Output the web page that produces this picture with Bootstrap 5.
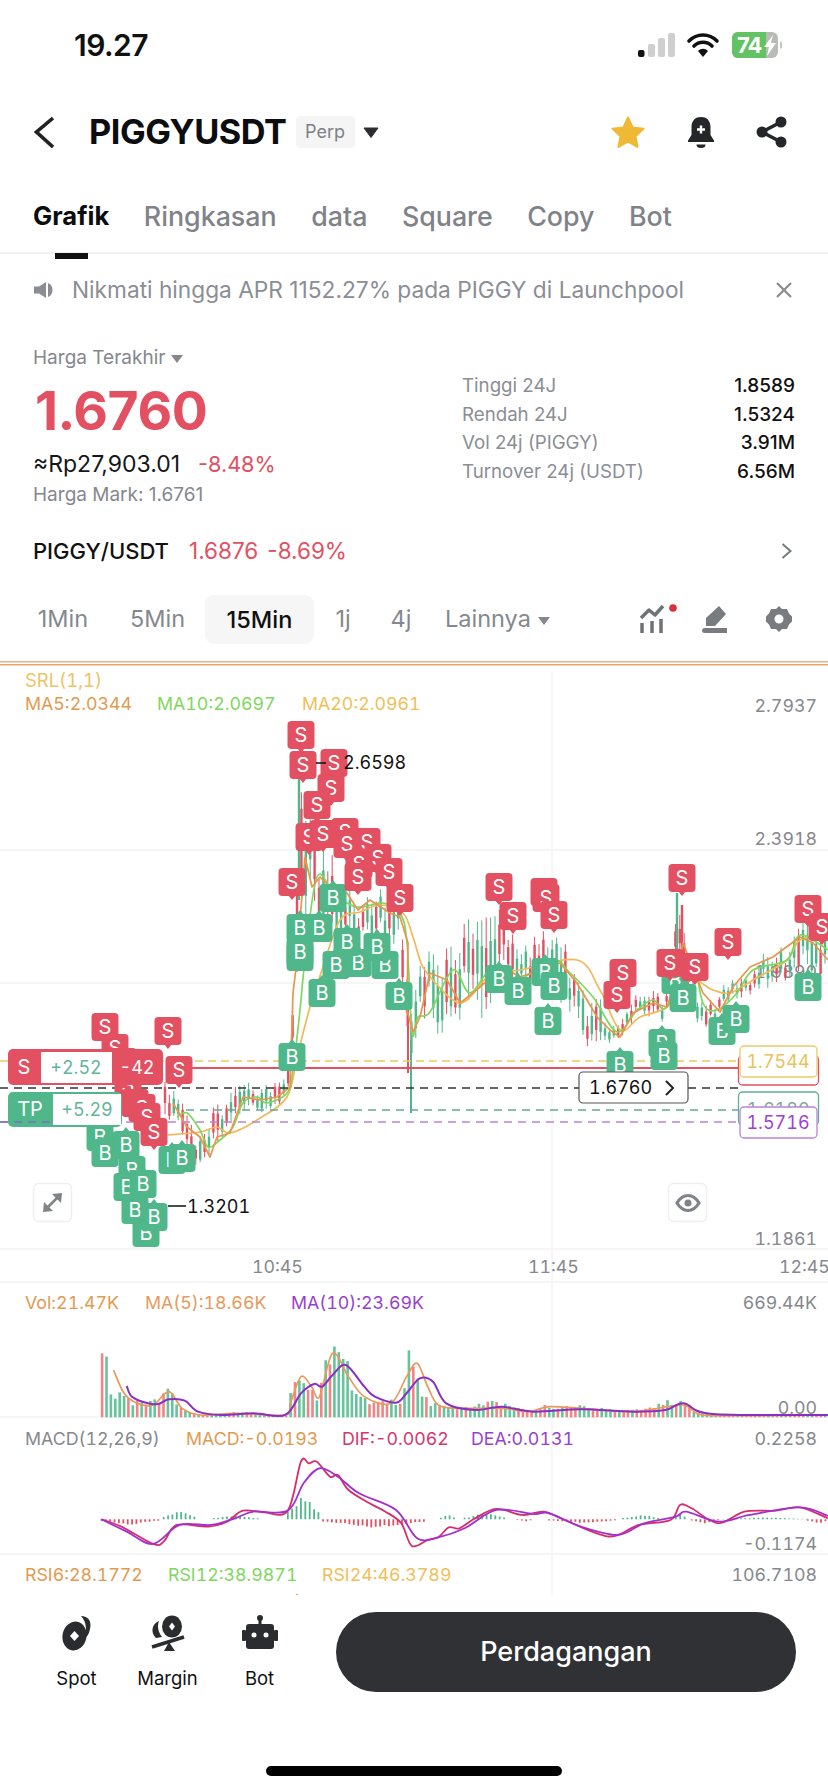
<!DOCTYPE html>
<html lang="id"><head><meta charset="utf-8"><title>PIGGYUSDT</title>
<link href="https://cdn.jsdelivr.net/npm/bootstrap@5.3.0/dist/css/bootstrap.min.css" rel="stylesheet">
<style>
body{margin:0;background:#fff;font-family:Inter,"Liberation Sans",sans-serif;color:#1b1c1f}
.k-app{width:828px;height:1792px;overflow:hidden}
.k-status{height:90px;padding:0 44px 0 74px}
.k-clock{font-size:30px;font-weight:600;letter-spacing:-.5px;color:#111}
.k-head{height:84px;padding:0 41px 0 34px}
.k-title{font-size:34.3px;font-weight:700;margin-left:35px;letter-spacing:-.45px;color:#0c0d0f}
.k-perp{width:59px;height:32px;background:#f5f5f5;border-radius:4px;margin-left:9px;font-size:18px;color:#7d8187;line-height:32px;text-align:center}
.k-tabs{height:80px;padding:0 33px;gap:34.5px;border-bottom:2px solid #f1f2f3;font-size:26.8px;color:#7f8389;font-weight:500}
.k-tab-on{color:#0c0d0f;font-weight:700;font-size:25.6px}
.k-tab-on::after{content:"";position:absolute;left:22px;bottom:-28px;width:33px;height:6px;background:#111}
.k-tabitem{line-height:30px;padding-top:6px}
.k-notice{height:72px;padding:0 36px 0 33px;color:#8a8e94;font-size:22.7px}
.k-stats{height:195px;padding:0 33px}
.k-lab{line-height:24px;padding-top:20px;box-sizing:content-box;font-size:19px;color:#84888e}
.k-price{line-height:82px;font-size:53.5px;font-weight:700;color:#e25061;letter-spacing:-.5px;padding-left:2px}
.k-rp{line-height:24px;font-size:23px;font-weight:400;color:#15161a}
.k-pct{font-size:21.6px;margin-left:18px;color:#e25061}
.k-red{color:#e25061}
.k-mark{line-height:38px;font-size:19px;color:#84888e}
.k-right{width:333px;padding-top:46px;font-size:18.7px;color:#8a8e94}
.k-right>div{height:28.7px;line-height:28.7px}
.k-right b{font-weight:500;color:#111;font-size:19px}
.k-pair{height:60px;padding:0 36px 0 33px;font-size:22px;font-weight:500;color:#111}
.k-pair span.k-red{font-weight:400;font-size:22.5px;margin-left:9px}
.k-pair span.k-first{margin-left:20px}
.k-frames{height:80px;padding-left:16px;padding-right:36px;padding-bottom:4px;font-size:23.5px;color:#84888e}
.k-fr{text-align:center}
.k-chip{width:109px;height:49px;line-height:49px;background:#f6f6f6;border-radius:9px;color:#111;font-weight:500}
.k-chart{display:block;width:828px;height:934px}
.k-chart text{font-family:Inter,"Liberation Sans",sans-serif;font-size:17.8px;font-variant-numeric:tabular-nums}
.k-chart .k-ax{fill:#85888c}
.k-chart .k-mk{font-size:18px;text-anchor:middle;fill:#fff}
.k-chart .k-let{font-size:20px;text-anchor:middle;fill:#fff}
.k-chart .k-blk{font-size:18px;fill:#111}
.k-chart .k-sr{font-size:18.4px;fill:#ecc566}
.k-bar{height:171px;padding-top:17px;padding-left:31px;padding-right:32px}
.k-act{padding-top:3px;text-align:center;font-size:18.5px;color:#111}
.k-act svg{display:block;margin:0 auto}
.k-act div{line-height:26px;margin-top:14px}
.k-trade{width:460px;height:80px;background:#2f3135;border:0;border-radius:40px;color:#fff;font-size:27px;font-weight:500}
.k-trade:hover{background:#2f3135;color:#fff}
.k-home{width:296px;height:10px;background:#000;border-radius:5px;margin-left:266px}
</style></head>
<body>
<div class="k-app d-flex flex-column">
 <div class="k-status d-flex align-items-center justify-content-between">
  <div class="k-clock">19.27</div>
  <svg width="152" height="30" viewBox="632 30 152 30">
   <rect x="638" y="50" width="6.5" height="7" rx="2" fill="#111"/><rect x="648" y="44" width="7" height="13" rx="2" fill="#cfcfcf"/><rect x="658" y="38" width="7" height="19" rx="2" fill="#cfcfcf"/><rect x="668" y="33" width="7" height="24" rx="2" fill="#cfcfcf"/>
   <g fill="none" stroke="#111" stroke-width="3.6" stroke-linecap="round"><path d="M689 41C697 33 709 33 717 41"/><path d="M694 46C699 41 707 41 712 46"/></g><path d="M698 51C701 48 705 48 708 51L703 57Z" fill="#111"/>
   <rect x="732" y="32" width="46" height="26" rx="6" fill="#b9bbb9"/><path d="M738 32H766V58H738A6 6 0 0 1 732 52V38A6 6 0 0 1 738 32Z" fill="#62c264"/><path d="M780 41c3 1 3 7 0 8z" fill="#c4c4c4"/>
   <text x="737" y="53" font-family="Inter,Liberation Sans,sans-serif" font-weight="700" font-size="22" fill="#fff" letter-spacing="-1">74</text>
   <path d="M773 35L764 47H769L767 56L776 43H771Z" fill="#fff"/>
  </svg>
 </div>
 <div class="k-head d-flex align-items-center">
  <svg width="20" height="32" viewBox="34 116 20 32" fill="none" stroke="#222" stroke-width="3.6"><path d="M53 118L36.500 132L53 147"/></svg>
  <div class="k-title">PIGGYUSDT</div>
  <div class="k-perp">Perp</div>
  <svg class="ms-2" width="16" height="11" viewBox="0 0 16 11"><path d="M1 1H15L8 10.500Z" fill="#2a2c30" stroke="#2a2c30" stroke-linejoin="round"/></svg>
  <div class="ms-auto d-flex align-items-center" style="gap:40px">
   <svg width="36" height="34" viewBox="0 0 36 34"><path d="M18 2.500L22.600 12.500L33.500 13.800L25.500 21.200L27.600 32L18 26.600L8.400 32L10.500 21.200L2.500 13.800L13.400 12.500Z" fill="#f0b935" stroke="#f0b935" stroke-width="2" stroke-linejoin="round"/></svg>
   <svg width="30" height="32" viewBox="0 0 30 32"><path d="M15 1C8 1 5.500 6 5.500 11V19L2 24.500V26H28V24.500L24.500 19V11C24.500 6 22 1 15 1Z" fill="#24262a"/><path d="M10.500 28.500A4.500 3.500 0 0 0 19.500 28.500Z" fill="#24262a"/><path d="M15 9.500V17.500M11 13.500H19" stroke="#fff" stroke-width="2.400"/></svg>
   <svg width="31" height="32" viewBox="0 0 31 32"><g fill="#24262a"><circle cx="25" cy="6" r="5.500"/><circle cx="6" cy="16" r="5.500"/><circle cx="25" cy="26" r="5.500"/></g><path d="M25 6L6 16L25 26" fill="none" stroke="#24262a" stroke-width="3.500"/></svg>
  </div>
 </div>
 <div class="k-tabs d-flex align-items-center">
  <div class="k-tabitem k-tab-on position-relative">Grafik</div><div class="k-tabitem">Ringkasan</div><div class="k-tabitem">data</div><div class="k-tabitem">Square</div><div class="k-tabitem">Copy</div><div class="k-tabitem">Bot</div>
 </div>
 <div class="k-notice d-flex align-items-center">
  <svg class="me-3" width="23" height="18" viewBox="0 0 23 18"><path d="M1 5.500H6L13 1V17L6 12.500H1Z" fill="#8a8e94"/><path d="M15 2C21 4 21 14 15 16Z" fill="#8a8e94"/></svg>
  <div>Nikmati hingga APR 1152.27% pada PIGGY di Launchpool</div>
  <svg class="ms-auto" width="16" height="16" viewBox="0 0 16 16"><path d="M1 1L15 15M15 1L1 15" stroke="#888b90" stroke-width="2.200"/></svg>
 </div>
 <div class="k-stats d-flex justify-content-between">
  <div>
   <div class="k-lab">Harga Terakhir <svg width="12" height="8" viewBox="0 0 12 8" style="vertical-align:1px"><path d="M0 0H12L6 8Z" fill="#84888e"/></svg></div>
   <div class="k-price">1.6760</div>
   <div class="k-rp">≈Rp27,903.01<span class="k-pct">-8.48%</span></div>
   <div class="k-mark">Harga Mark: 1.6761</div>
  </div>
  <div class="k-right">
   <div class="d-flex justify-content-between"><span>Tinggi 24J</span><b>1.8589</b></div>
   <div class="d-flex justify-content-between"><span>Rendah 24J</span><b>1.5324</b></div>
   <div class="d-flex justify-content-between"><span>Vol 24j (PIGGY)</span><b>3.91M</b></div>
   <div class="d-flex justify-content-between"><span>Turnover 24j (USDT)</span><b>6.56M</b></div>
  </div>
 </div>
 <div class="k-pair d-flex align-items-center">
  <div>PIGGY/USDT</div><span class="k-red k-first">1.6876</span><span class="k-red">-8.69%</span>
  <svg class="ms-auto" width="11" height="16" viewBox="0 0 11 16"><path d="M1.500 1L9.500 8L1.500 15" fill="none" stroke="#777b80" stroke-width="2"/></svg>
 </div>
 <div class="k-frames d-flex align-items-center">
  <div class="k-fr" style="width:94px">1Min</div><div class="k-fr" style="width:95px">5Min</div><div class="k-fr k-chip">15Min</div><div class="k-fr" style="width:58px">1j</div><div class="k-fr" style="width:58px">4j</div>
  <div style="padding-left:15px">Lainnya <svg width="12" height="8" viewBox="0 0 12 8" style="vertical-align:2px"><path d="M0 0H12L6 8Z" fill="#84888e"/></svg></div>
  <div class="ms-auto d-flex align-items-center">
   <svg width="38" height="30" viewBox="0 0 38 30"><path d="M2 14L10 6L16 11L24 2" fill="none" stroke="#6f7378" stroke-width="3.500" stroke-linejoin="round"/><path d="M3 19V29M13 17V29M22 15V29" stroke="#6f7378" stroke-width="3.500"/><circle cx="34" cy="4" r="3.800" fill="#d8303c"/></svg>
   <svg style="margin-left:25px" width="26" height="27" viewBox="0 0 26 27"><path d="M17 0L24 8L13 20H4V12ZM3 22H25V27H3Q0 27 0 24.500Q0 22 3 22Z" fill="#787c81"/></svg>
   <svg style="margin-left:38px" width="26" height="26" viewBox="0 0 26 26"><path fill-rule="evenodd" d="M13 0L16 3L21 3L23 7.500L26 10.500V15.500L23 18.500L21 23L16 23L13 26L10 23L5 23L3 18.500L0 15.500V10.500L3 7.500L5 3L10 3ZM13 8.500A4.500 4.500 0 1 0 13 17.500A4.500 4.500 0 1 0 13 8.500Z" fill="#787c81"/></svg>
  </div>
 </div>
 <svg class="k-chart" viewBox="0 661 828 934" id="chart">
  <rect x="0" y="661" width="828" height="1.500" fill="#d9b78c"/><rect x="0" y="664" width="828" height="1.500" fill="#eaa468"/>
  <g stroke="#f3f3f4" stroke-width="1.300"><path d="M552 672V1595M0 850H828M0 983H828M0 1249H828M0 1282H828M0 1554H828M0 1417H828"/></g>
  <text x="817" y="978" text-anchor="end" class="k-ax">1.9890</text>
  <g id="vol"></g><g id="candles"></g>
  <g fill="none" stroke-width="1.700" stroke-linejoin="round">
   <path id="ma20" stroke="#f0b95a"/><path id="ma10" stroke="#7fd85e"/><path id="ma5" stroke="#e9954c"/>
  </g>
  <g fill="none" stroke-width="1.500">
   <path d="M0 1061H740" stroke="#ebc95f" stroke-dasharray="8 5"/>
   <path d="M186 1068H740" stroke="#e25061" stroke-width="2"/>
   <path d="M0 1088H579M688 1088H740" stroke="#333" stroke-dasharray="8 6"/>
   <path d="M186 1110H740" stroke="#63a99b" stroke-dasharray="8 6"/>
   <path d="M0 1122H740" stroke="#b884d8" stroke-dasharray="8 6"/>
  </g>
  <g id="marks"></g>
  <!-- order chips -->
  <rect x="8" y="1049" width="155" height="36" rx="5" fill="#e25061"/><rect x="41" y="1052" width="71" height="31" fill="#fff"/>
  <text x="24" y="1074" class="k-let">S</text><text x="76" y="1074" class="k-mk" style="fill:#63b59a">+2.52</text><text x="137" y="1074" class="k-mk">-42</text>
  <rect x="8" y="1092" width="114" height="35" rx="5" fill="#4fb78a"/><rect x="53" y="1094" width="68" height="31" fill="#fff"/>
  <text x="30" y="1116" class="k-let">TP</text><text x="87" y="1116" class="k-mk" style="fill:#63b59a">+5.29</text>
  <path d="M0 1122H53" stroke="#7f6fc0" stroke-width="1.500" stroke-dasharray="8 6"/>
  <!-- price tags -->
  <rect x="579" y="1072" width="109" height="31" rx="4" fill="#fff" stroke="#555" stroke-width="1.200"/>
  <text x="589" y="1094" style="font-size:18px;fill:#111">1.6760</text><path d="M666 1081L673 1088L666 1095" fill="none" stroke="#222" stroke-width="2"/>
  <rect x="738.500" y="1056" width="80" height="29" rx="4" fill="#fff" stroke="#e25061" stroke-width="1.300"/>
  <rect x="740" y="1046" width="77" height="31" rx="4" fill="#fff" stroke="#ecc96a" stroke-width="1.300"/>
  <text x="778" y="1068" class="k-mk" style="fill:#e9c25a">1.7544</text>
  <rect x="738.500" y="1092" width="80" height="33" rx="4" fill="#fff" stroke="#5fae95" stroke-width="1.300"/>
  <text x="778" y="1116" class="k-mk" style="fill:#7fa99b">1.6180</text>
  <rect x="740" y="1107" width="77" height="31" rx="4" fill="#fff" stroke="#b884d8" stroke-width="1.300"/>
  <text x="778" y="1129" class="k-mk" style="fill:#a03fd0">1.5716</text>
  <!-- floating buttons -->
  <rect x="33.500" y="1183.500" width="38" height="38" rx="5" fill="#fff" stroke="#efefef" stroke-width="1.500"/>
  <path d="M47 1208L58 1197" stroke="#808388" stroke-width="2.600"/><path d="M62 1193L52 1194L61 1203ZM43 1212L44 1202L53 1211Z" fill="#808388"/>
  <rect x="668.500" y="1183.500" width="38" height="38" rx="5" fill="#fff" stroke="#efefef" stroke-width="1.500"/>
  <path d="M677 1203C683 1193 693 1193 699 1203C693 1213 683 1213 677 1203Z" fill="none" stroke="#808388" stroke-width="3.200"/><circle cx="688" cy="1203" r="3.500" fill="#808388"/>
  <!-- axis and legends -->
  <text x="25" y="687" class="k-sr">SRL(1,1)</text>
  <text x="25" y="710" style="fill:#e29a50">MA5:2.0344</text><text x="157" y="710" style="fill:#80d75f">MA10:2.0697</text><text x="302" y="710" style="fill:#efbf5a">MA20:2.0961</text>
  <g text-anchor="end"><text x="817" y="712" class="k-ax">2.7937</text><text x="817" y="845" class="k-ax">2.3918</text><text x="817" y="1245" class="k-ax">1.1861</text></g>
  <path d="M316 763H326M168 1206H186" stroke="#111" stroke-width="1.500"/>
  <text x="343" y="769" class="k-blk">2.6598</text><text x="187" y="1213" class="k-blk">1.3201</text>
  <text x="252" y="1273" class="k-ax">10:45</text><text x="528" y="1273" class="k-ax">11:45</text><text x="779" y="1273" class="k-ax">12:45</text>
  <text x="25" y="1309" style="fill:#e29a50">Vol:21.47K</text><text x="145" y="1309" style="fill:#e8995c">MA(5):18.66K</text><text x="291" y="1309" style="fill:#9a3fcb">MA(10):23.69K</text>
  <text x="817" y="1309" text-anchor="end" class="k-ax">669.44K</text>
  <text x="817" y="1414" text-anchor="end" class="k-ax">0.00</text>
  <g fill="none" stroke-width="1.700" transform="translate(0,1260) scale(.528,.3333)">
   <path class="k-sm" stroke="#e9995a" vector-effect="non-scaling-stroke" data-p="215,330 235,400 260,430 290,435 320,395 345,445 380,465 450,460 540,465 550,430 570,350 590,380 605,410 630,280 660,350 690,410 740,430 770,350 790,310 810,380 830,435 870,445 950,445 1000,455 1040,440 1100,445 1200,455 1290,435 1320,460 1360,467 1568,465"/>
   <path class="k-sm" stroke="#8a2fc4" stroke-width="2" vector-effect="non-scaling-stroke" data-p="240,378 250,410 280,430 300,432 320,418 350,422 375,455 420,465 480,460 540,465 570,400 595,372 610,380 630,345 655,315 690,380 710,410 750,428 770,400 795,355 820,365 845,430 900,450 950,440 1010,455 1100,448 1200,455 1260,450 1295,430 1350,462 1568,465"/>
  </g>
  <text x="25" y="1445" style="fill:#85888c">MACD(12,26,9)</text><text x="186" y="1445" style="fill:#e29a50">MACD:-0.0193</text><text x="342" y="1445" style="fill:#d5366d">DIF:-0.0062</text><text x="471" y="1445" style="fill:#9a3fcb">DEA:0.0131</text>
  <text x="817" y="1445" text-anchor="end" class="k-ax">0.2258</text><text x="817" y="1550" text-anchor="end" class="k-ax">-0.1174</text>
  <g id="hist"></g>
  <g fill="none" stroke-width="1.800" transform="translate(0,1260) scale(.528,.3333)">
   <path class="k-sm" stroke="#d92c6a" vector-effect="non-scaling-stroke" data-p="192,778 230,800 290,852 310,845 335,795 395,800 430,785 460,752 500,757 545,752 570,605 585,610 600,605 625,650 640,645 660,690 700,730 730,755 760,790 780,858 810,840 830,832 850,802 870,805 900,775 940,747 990,765 1030,755 1070,780 1130,820 1165,828 1210,795 1270,780 1288,735 1310,745 1360,790 1410,755 1470,752 1515,742 1568,775"/>
   <path class="k-sm" stroke="#a22fd0" vector-effect="non-scaling-stroke" data-p="192,778 240,815 290,852 340,795 400,795 445,775 480,755 545,752 575,670 605,625 640,650 680,700 750,750 790,835 830,832 880,805 940,750 1010,762 1040,760 1100,800 1170,825 1220,790 1280,770 1300,755 1360,785 1420,765 1515,742 1568,768"/>
  </g>
  <text x="25" y="1581" style="fill:#e29a50">RSI6:28.1772</text><text x="168" y="1581" style="fill:#80d75f">RSI12:38.9871</text><text x="322" y="1581" style="fill:#efbf5a">RSI24:46.3789</text>
  <text x="817" y="1581" text-anchor="end" class="k-ax">106.7108</text>
  <circle cx="297" cy="1595" r="1.300" fill="#e9b34a"/>
 </svg>
 <div class="k-bar d-flex align-items-start">
  <div class="k-act" style="width:91px"><svg width="34" height="36" viewBox="0 0 34 36"><path d="M21 1C28 1 32 6 30 14C29 19 27 22 24 24C27 17 27 7 21 1Z" fill="#2a2c30"/><ellipse cx="14.500" cy="21" rx="12" ry="14.500" transform="rotate(12 14.500 21)" fill="#2a2c30"/><path d="M14.500 16L19 21L14.500 26L10 21Z" fill="#fff"/></svg><div>Spot</div></div>
  <div class="k-act" style="width:91px"><svg width="36" height="36" viewBox="0 0 36 36"><ellipse cx="22" cy="11.500" rx="10" ry="11" fill="#2a2c30"/><path d="M22 7.500L25 11.500L22 15.500L19 11.500Z" fill="#fff"/><path d="M9 6C2 9 0 17 6 23L12 22C8 17 7 11 9 6Z" fill="#2a2c30"/><path d="M2 32L34 22" stroke="#2a2c30" stroke-width="3.500"/><path d="M14 36L19 27L25 36Z" fill="#2a2c30"/></svg><div>Margin</div></div>
  <div class="k-act" style="width:93px"><svg width="36" height="36" viewBox="0 0 36 36"><circle cx="18" cy="3" r="3" fill="#2a2c30"/><rect x="16.500" y="4" width="3" height="6" fill="#2a2c30"/><rect x="4" y="9" width="28" height="25" rx="3" fill="#2a2c30"/><rect x="0" y="15" width="4" height="11" rx="1" fill="#2a2c30"/><rect x="32" y="15" width="4" height="11" rx="1" fill="#2a2c30"/><circle cx="12" cy="20" r="2.500" fill="#fff"/><circle cx="24" cy="20" r="2.500" fill="#fff"/></svg><div>Bot</div></div>
  <button class="btn k-trade ms-auto" type="button">Perdagangan</button>
 </div>
 <div class="k-home"></div>
</div>
<script>
(function(){
var seed=12345;function R(){seed=(seed*16807)%2147483647;return seed/2147483647}
function L(p,x){if(x<=p[0][0])return p[0].slice(1);for(var i=1;i<p.length;i++){if(x<=p[i][0]){var t=(x-p[i-1][0])/(p[i][0]-p[i-1][0]);return p[i].slice(1).map(function(v,j){return p[i-1][j+1]+(v-p[i-1][j+1])*t})}}return p[p.length-1].slice(1)}
function curve(str){var a=str.split(' ').map(function(s){return s.split(',').map(Number)}),d='M'+a[0][0]+' '+a[0][1];
 for(var i=0;i<a.length-1;i++){var p0=a[i-1]||a[i],p1=a[i],p2=a[i+1],p3=a[i+2]||p2;
  d+='C'+(p1[0]+(p2[0]-p0[0])/6).toFixed(1)+' '+(p1[1]+(p2[1]-p0[1])/6).toFixed(1)+' '+(p2[0]-(p3[0]-p1[0])/6).toFixed(1)+' '+(p2[1]-(p3[1]-p1[1])/6).toFixed(1)+' '+p2[0]+' '+p2[1]}
 return d}
document.querySelectorAll('.k-sm').forEach(function(e){e.setAttribute('d',curve(e.getAttribute('data-p')))});
var G='#4fb78a',D='#e25061';
var band=[[165,1053,1120],[172,1085,1130],[180,1095,1135],[190,1120,1165],[200,1130,1167],[208,1120,1165],[216,1100,1150],[225,1105,1145],[235,1075,1120],[245,1080,1115],[260,1085,1115],[275,1080,1110],[287,1075,1100],[292,1000,1060],[296,860,1010],[299,760,950],[305,790,950],[315,810,930],[330,850,950],[345,880,950],[360,890,945],[375,890,950],[390,880,950],[400,900,970],[406,960,1040],[412,1000,1070],[418,960,1040],[428,950,1020],[440,945,1037],[455,945,1035],[465,915,1010],[482,905,1030],[495,910,1030],[505,895,975],[513,930,1000],[530,940,985],[537,922,985],[555,935,1000],[566,940,1015],[587,993,1047],[600,993,1047],[610,1023,1043],[620,1023,1043],[637,990,1017],[660,990,1017],[665,1000,1030],[677,893,960],[682,905,960],[690,960,1000],[697,1000,1027],[717,1000,1027],[723,977,1003],[753,977,1003],[757,947,990],[787,947,985],[793,913,975],[828,925,985]];
var s='';
for(var x=165;x<828;x+=4.4){var b=L(band,x),h=b[1]-b[0],len=h*(.45+R()*.35),top=b[0]+R()*(h-len),c=R()<.5?G:D;
 var o=top+len*(.15+R()*.2),e=top+len*(.65+R()*.25);
 s+='<path d="M'+x.toFixed(1)+' '+top.toFixed(1)+'V'+(top+len).toFixed(1)+'" stroke="'+c+'" stroke-width="1"/><rect x="'+(x-1.2).toFixed(1)+'" y="'+o.toFixed(1)+'" width="2.4" height="'+(e-o).toFixed(1)+'" fill="'+c+'"/>'}
s+='<path d="M408 1010V1073" stroke="'+D+'" stroke-width="2"/><path d="M411 1040V1113" stroke="'+G+'" stroke-width="2"/><path d="M299 760V900" stroke="'+G+'" stroke-width="2.400"/><path d="M677 893V950" stroke="'+G+'" stroke-width="2.400"/><path d="M682 905V960" stroke="'+D+'" stroke-width="2.400"/>';
document.getElementById('candles').innerHTML=s;
document.getElementById('ma5').setAttribute('d','M'+'173,1103 187,1127 200,1137 210,1157 217,1137 230,1133 243,1097 260,1100 277,1097 290,1087 293,993 297,960 305,857 312,887 320,877 333,890 347,893 358,910 370,900 390,913 400,917 408,943 407,1010 413,1032 420,1017 430,973 447,980 460,1003 473,993 503,967 520,977 560,963 577,983 597,1017 610,1030 620,1037 633,1013 653,1003 667,1007 677,975 683,943 687,953 703,993 720,1012 733,987 750,967 773,957 800,937 813,943 828,960'.replace(/ /g,'L'));
document.getElementById('ma10').setAttribute('d',curve('177,1117 187,1113 200,1130 208,1147 220,1140 233,1127 243,1103 257,1097 267,1103 287,1093 293,1070 300,1010 305,960 317,877 335,895 357,907 383,903 400,913 407,943 412,1033 418,1017 430,1012 453,970 470,993 493,967 517,980 553,960 570,973 593,997 617,1032 637,1010 653,1000 667,1007 690,955 703,1003 717,1010 737,993 753,970 787,960 800,935 828,950'));
document.getElementById('ma20').setAttribute('d',curve('168,1135 200,1132 217,1127 230,1133 257,1120 287,1097 297,1057 310,1007 322,970 340,920 360,912 380,905 403,913 413,937 420,960 427,973 453,1000 467,1000 490,975 520,970 577,960 600,990 620,1030 640,1017 667,1007 690,980 713,990 730,993 753,980 787,960 800,940 828,935'));
var env=[[190,262],[197,245],[205,350],[215,380],[230,400],[250,420],[280,420],[305,395],[312,355],[320,390],[345,445],[380,465],[450,455],[540,465],[550,350],[570,312],[580,360],[600,410],[615,240],[630,255],[650,262],[665,360],[690,410],[720,420],[755,410],[765,375],[777,195],[790,340],[810,425],[860,440],[915,425],[945,420],[1000,450],[1030,430],[1075,430],[1130,440],[1220,445],[1280,410],[1290,405],[1310,450],[1360,465],[1568,462]];
var v='';for(var X=191;X<1568;X+=8.3){var t=L(env,X)[0],hh=(472-t)*(.6+R()*.4),col=R()<.5?'#66c39c':'#ef8585',px=X*.528;
 v+='<rect x="'+px.toFixed(1)+'" y="'+(1260+(472-hh)/3).toFixed(1)+'" width="2.600" height="'+(hh/3).toFixed(1)+'" fill="'+col+'"/>'}
document.getElementById('vol').innerHTML=v;
var hs=[[192,300,795,'#e2505f'],[310,370,748,'#4fb78a'],[405,490,765,'#4fb78a'],[545,605,700,'#4fb78a'],[612,810,805,'#e2505f'],[835,860,760,'#4fb78a'],[880,960,758,'#4fb78a'],[980,1010,785,'#e2505f'],[1040,1170,790,'#e2505f'],[1180,1250,763,'#4fb78a'],[1280,1300,755,'#4fb78a'],[1310,1360,790,'#e2505f'],[1370,1530,772,'#4fb78a'],[1530,1568,792,'#e2505f']];
var hh2='';hs.forEach(function(a){var mid=(a[0]+a[1])/2,w=(a[1]-a[0])/2;for(var X=a[0];X<a[1];X+=8.3){var f=Math.max(.3,1-Math.abs(X-mid)/w*.8);f*=(.75+R()*.25);var y1=1260+778/3,y2=1260+(778+(a[2]-778)*f)/3;
 hh2+='<path d="M'+(X*.528).toFixed(1)+' '+y1.toFixed(1)+'V'+y2.toFixed(1)+'" stroke="'+a[3]+'" stroke-width="1.800"/>'}});
document.getElementById('hist').innerHTML=hh2;
var M=[
'B,292,1057','B,300,957','B,336,965','B,358,963','B,385,965','B,322,993','B,399,996','B,300,928','B,300,952','B,319,928','B,347,942','B,377,947','B,333,898',
'S,301,735','S,303,765','S,334,763','S,331,788','S,317,805','S,309,837','S,345,832','S,347,844','S,323,834','S,367,842','S,359,864','S,358,877','S,378,858','S,389,872','S,292,882','S,400,898',
'B,499,979','B,518,991','B,545,972','B,554,986','B,548,1021','B,620,1065','B,662,1043','B,664,1056','B,675,980','B,683,998','B,722,1031','B,736,1019','B,808,987',
'S,499,887','S,513,916','S,544,892','S,546,898','S,554,915','S,682,878','S,623,973','S,617,995','S,670,963','S,695,967','S,728,942','S,808,909','S,822,927',
'B,100,1137','B,105,1153','B,126,1145','B,132,1170','B,127,1187','B,143,1184','B,135,1210','B,146,1233','B,154,1217','B,172,1160','B,182,1158',
'S,105,1027','S,115,1048','S,168,1031','S,179,1070','S,123,1062','S,128,1085','S,135,1103','S,142,1108','S,147,1117','S,154,1132'];
var m='';M.forEach(function(q){var a=q.split(','),k=a[0],x=+a[1],y=+a[2],c=k=='S'?D:G;
 var tip=k=='S'?'M'+(x-4)+' '+(y+13)+'L'+x+' '+(y+18)+'L'+(x+4)+' '+(y+13)+'Z':'M'+(x-4)+' '+(y-13)+'L'+x+' '+(y-18)+'L'+(x+4)+' '+(y-13)+'Z';
 m+='<rect x="'+(x-13.5)+'" y="'+(y-14)+'" width="27" height="28" rx="4" fill="'+c+'"/><path d="'+tip+'" fill="'+c+'"/><text x="'+x+'" y="'+(y+7)+'" class="k-let">'+k+'</text>'});
document.getElementById('marks').innerHTML=m;
})();
</script>
<script src="https://cdn.jsdelivr.net/npm/bootstrap@5.3.0/dist/js/bootstrap.bundle.min.js"></script>
</body></html>
